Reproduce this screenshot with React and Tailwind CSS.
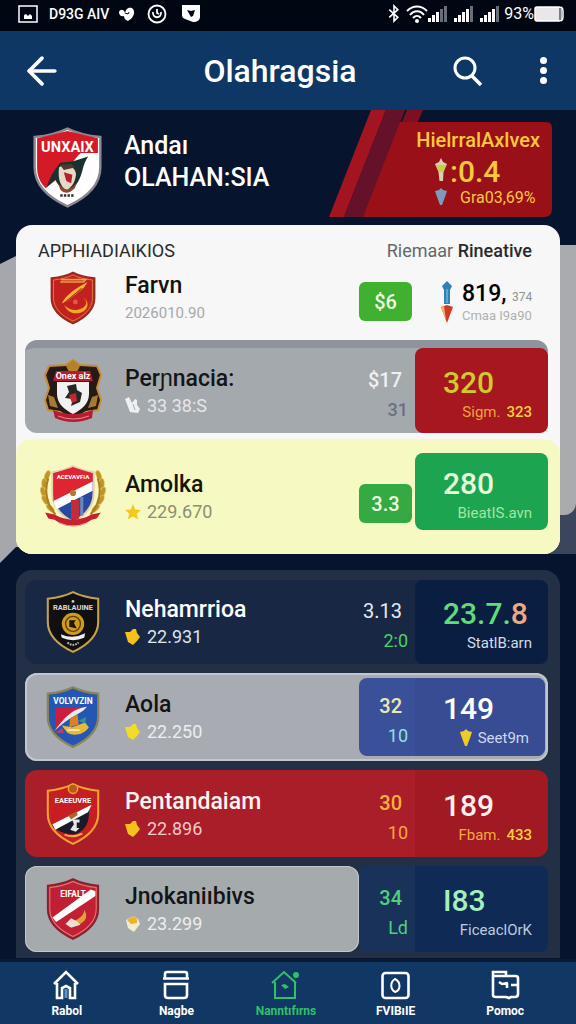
import { ArrowLeft } from "lucide-react";

const SHIELD = "M30 2 C38 6 47 8 57 9 V34 C57 49 45 59 30 66 C15 59 3 49 3 34 V9 C13 8 22 6 30 2 Z";

function CrestText({ children, y = 19, fill = "#fff", size = 9 }) {
  return (
    <text x="30" y={y} textAnchor="middle" fontSize={size} fontWeight="700" fill={fill}>
      {children}
    </text>
  );
}

function HeroCrest() {
  return (
    <svg viewBox="0 0 60 68" className="h-[83px] w-[73px]" aria-hidden="true">
      <path d={SHIELD} fill="#fff" stroke="#8b8790" strokeWidth="2" />
      <path d="M30 4 L55 10 V22 H41 C36 26 32 34 27 39 L12 51 C7 46 5 40 5 34 V10 Z" fill="#d31a26" />
      <path d="M13 50 C16 39 22 33 24 30 L34 29 L47 25 C42 32 43 38 39 45 C34 54 25 55 20 44 Z" fill="#1d3030" />
      <path d="M23 34 C28 30 37 33 37 40 C36 48 32 51 29 53 C24 49 22 44 23 34 Z" fill="#e8d8c8" />
      <path d="M24 32 L33 31 L36 34 L27 36 Z" fill="#4a3a30" />
      <path d="M27 38 L34 40 L33 47 L29 45 Z" fill="#b5202a" />
      <path d="M22 46 Q29 58 38 46 L36 51 Q29 58 24 52 Z" fill="#8f4530" />
      <path d="M24 57 h11" stroke="#333" strokeWidth="2" strokeDasharray="2 1" />
      <CrestText size={12} y={21}>UNXAIX</CrestText>
    </svg>
  );
}

function FarvnCrest() {
  return (
    <svg viewBox="0 0 60 68" className="h-14 w-12" aria-hidden="true">
      <path d={SHIELD} fill="#c2211f" stroke="#8f2a20" strokeWidth="2" />
      <path d={SHIELD} fill="none" stroke="#e29a4a" strokeWidth="1" transform="translate(3 3.4) scale(0.9)" />
      <path d="M15 11 H46 L43 14 H14" fill="none" stroke="#e8a040" strokeWidth="2" />
      <path d="M16 41 C20 31 33 22 48 14 C44 24 34 28 23 38 Z" fill="#f2b632" />
      <path d="M17 42 L41 22" stroke="#c2211f" strokeWidth="1.5" />
      <path d="M19 43 C26 50 37 51 44 45 C48 41 47 37 43 34 C52 39 49 51 37 53 C29 54 23 51 19 43 Z" fill="#f2a922" />
      <circle cx="33" cy="39" r="3" fill="#e8574a" />
    </svg>
  );
}

function PernaciaCrest() {
  return (
    <svg viewBox="0 0 60 66" className="h-[66px] w-[60px]" aria-hidden="true">
      <path d="M30 2 L37 7 L54 8 L58 17 L54 30 L58 42 L55 52 L43 54 L30 62 L17 54 L5 52 L2 42 L6 30 L2 17 L6 8 L23 7 Z" fill="#251a16" stroke="#c98c35" strokeWidth="2" />
      <path d="M30 2 L37 8 L34 14 H26 L23 8 Z" fill="#b78225" />
      <path d="M13 13 H47 L50 23 H10 Z" fill="#b91c2b" />
      <path d="M14 24 H46 V36 C46 46 38 52 30 56 C22 52 14 46 14 36 Z" fill="#f1f1f1" />
      <path d="M24 28 L33 26 L34 32 L39 35 L37 44 L28 48 L30 41 L22 40 L26 34 Z" fill="#272727" />
      <path d="M26 37 L33 35 L34 43 L29 45 Z" fill="#c02832" />
      <path d="M5 37 L11 39 L15 50 L7 48 Z M55 37 L49 39 L45 50 L53 48 Z" fill="#a77a31" />
      <path d="M10 52 Q30 60 50 52 L49 60 Q30 68 12 60 Z" fill="#b51c32" />
      <path d="M15 58 Q30 64 46 58" fill="none" stroke="#e58b92" strokeWidth="1" />
      <CrestText size={9} y={21}>Onex alz</CrestText>
    </svg>
  );
}

function AmolkaCrest() {
  return (
    <svg viewBox="0 0 68 62" className="h-16 w-[70px]" aria-hidden="true">
      <g fill="#c09428" stroke="#e6c560" strokeWidth="0.6">
        {[10, 18, 26, 34, 42].map((y, i) => (
          <g key={y}>
            <ellipse cx={[9, 6, 5, 7, 12][i]} cy={y} rx="2.4" ry="5" transform={`rotate(${[20, 0, -15, -30, -45][i]} ${[9, 6, 5, 7, 12][i]} ${y})`} />
            <ellipse cx={[59, 62, 63, 61, 56][i]} cy={y} rx="2.4" ry="5" transform={`rotate(${[-20, 0, 15, 30, 45][i]} ${[59, 62, 63, 61, 56][i]} ${y})`} />
          </g>
        ))}
      </g>
      <path d="M10 13 C6 24 8 38 17 48 M58 13 C62 24 60 38 51 48" fill="none" stroke="#a87d1c" strokeWidth="2" />
      <path d="M34 1 C40 4 47 6 54 7 V27 C54 41 46 49 34 55 C22 49 14 41 14 27 V7 C21 6 28 4 34 1 Z" fill="#2749a2" stroke="#e9cfa5" strokeWidth="2" />
      <path d="M34 2 L53 8 V17 L15 36 V8 Z" fill="#df2434" />
      <path d="M15 35 L53 16 V25 L18 43 Z" fill="#fff" />
      <path d="M32 34 h8 v18 l-5 2 l-3 -2 Z" fill="#c22d3c" />
      <path d="M41 31 h3 v18 h-3 Z" fill="#6a88bc" />
      <circle cx="34" cy="27" r="3" fill="#b77937" />
      <path d="M7 46 L16 48 Q34 58 52 48 L61 46 L57 52 L52 53 Q34 66 16 53 L10 52 Z" fill="#c8202f" />
      <path d="M20 56 Q34 62 48 56" fill="none" stroke="#e99" strokeWidth="1" />
      <text x="34" y="14" textAnchor="middle" fontSize="6" fontWeight="700" fill="#fff">ACEVAVFIA</text>
    </svg>
  );
}

function NehamCrest() {
  return (
    <svg viewBox="0 0 60 68" className="h-[66px] w-14" aria-hidden="true">
      <path d={SHIELD} fill="#101012" stroke="#c7a24a" strokeWidth="2.2" />
      <circle cx="30" cy="36" r="12" fill="#cf9c1f" />
      <circle cx="30" cy="36" r="8" fill="none" stroke="#5c4210" strokeWidth="1.5" />
      <path d="M26 32 h7 l-2 3 3 6 -8 -2 Z" fill="#1d1708" />
      <path d="M17 47 Q30 53 43 46 L42 51 Q30 56 18 51 Z" fill="#f0f0f0" />
      <path d="M24 56 Q30 61 36 56" fill="none" stroke="#bbb" strokeWidth="2" strokeDasharray="2 1" />
      <circle cx="30" cy="12" r="1.5" fill="#ccc" />
      <CrestText size={8} y={21} fill="#d8d8d8">RABLAUINE</CrestText>
    </svg>
  );
}

function AolaCrest() {
  return (
    <svg viewBox="0 0 60 68" className="h-[68px] w-14" aria-hidden="true">
      <path d={SHIELD} fill="#2457b4" stroke="#8d8454" strokeWidth="2.4" />
      <path d="M11 24 H38 L11 48 Z" fill="#c91f3d" />
      <path d="M10 49 C18 39 27 25 45 23 C39 31 28 32 10 49 Z" fill="#f0e8ef" />
      <path d="M27 35 L35 31 L36 42 L26 45 Z" fill="#d58229" />
      <path d="M18 43 L29 45 L43 40 L47 45 C42 53 31 55 24 51 Z" fill="#e7b936" />
      <path d="M36 38 L44 34 L43 41 Z" fill="#2c9b8d" />
      <path d="M24 48 h13" stroke="#f6e8aa" strokeWidth="2" />
      <path d="M11 51 L19 46 L20 51 Z" fill="#c04164" />
      <CrestText size={9} y={20}>VOLVVZIN</CrestText>
    </svg>
  );
}

function PentanCrest() {
  return (
    <svg viewBox="0 0 60 68" className="h-[66px] w-14" aria-hidden="true">
      <path d={SHIELD} fill="#c71e24" stroke="#f0a42c" strokeWidth="2.2" />
      <circle cx="30" cy="7" r="5" fill="#b9591c" stroke="#f0a42c" strokeWidth="1.5" />
      <path d="M9 48 L47 29 C48 42 44 52 32 56 C22 56 15 53 9 48 Z" fill="#191b26" />
      <path d="M8 45 L50 24 L46 32 L11 51 Z" fill="#fff" />
      <path d="M25 36 L34 31 L35 35 L28 40 Z" fill="#a9672d" />
      <path d="M29 40 h8 v3 h-3 v6 h3 l-4 4 -6 -2 4 -6 Z" fill="#e6e6e6" />
      <path d="M21 56 Q30 60 40 55" fill="none" stroke="#eeae55" strokeWidth="2" />
      <CrestText size={8} y={22}>EAEEUVRE</CrestText>
    </svg>
  );
}

function JnokanCrest() {
  return (
    <svg viewBox="0 0 60 68" className="h-[66px] w-14" aria-hidden="true">
      <path d={SHIELD} fill="#c01f34" stroke="#842334" strokeWidth="2" />
      <path d={SHIELD} fill="none" stroke="#e07f70" strokeWidth="1.2" transform="translate(2.4 2.7) scale(0.92)" />
      <path d="M8 43 L49 13 L54 15 V20 L12 48 Z" fill="#fff" />
      <path d="M25 48 C31 48 42 43 42 35 C49 45 38 53 26 52 Z" fill="#e3a13a" />
      <path d="M22 50 L28 44 L34 47 L38 51 L28 54 Z" fill="#e8dfd5" />
      <CrestText size={9} y={21}>EIFALT</CrestText>
    </svg>
  );
}

function Gem({ fill = "#f5c21b" }) {
  return (
    <svg viewBox="0 0 16 18" className="h-[18px] w-4" aria-hidden="true">
      <path d="M0 4 L5 4 L8 1 L11 1 L12 5 L15 9 L12 13 L8 17 L3 14 Z" fill={fill} />
    </svg>
  );
}

function PaleGem() {
  return (
    <svg viewBox="0 0 16 18" className="h-[18px] w-4" aria-hidden="true">
      <path d="M1 5 L8 1 L13 4 L15 9 L9 17 L3 13 Z" fill="#f4edcf" />
      <path d="M2 5 L8 1 L12 4 L12 8 L6 9 Z" fill="#f0b12c" />
    </svg>
  );
}

function Star() {
  return (
    <svg viewBox="0 0 16 16" className="h-4 w-4" aria-hidden="true">
      <path d="M8 0 L10.2 5.4 L16 6 L11.7 9.8 L13.2 15.6 L8 12.6 L2.8 15.6 L4.3 9.8 L0 6 L5.8 5.4 Z" fill="#f3c920" />
    </svg>
  );
}

function Glove() {
  return (
    <svg viewBox="0 0 16 17" className="h-[17px] w-4" aria-hidden="true">
      <path d="M0 2 L4 0 L7 6 L10 2 L12 3 L12 8 L15 12 L13 16 L5 15 Z" fill="#eef0f2" />
      <path d="M8 7 L10 13" stroke="#a9adb2" strokeWidth="1" />
    </svg>
  );
}

function Torch({ className, fill }) {
  return (
    <svg viewBox="0 0 12 24" className={className} aria-hidden="true">
      <path d="M6 0 L8 4 L12 6 L8.5 14 L8 23 L4.5 23 L3.5 14 L0 6 L4 4 Z" fill="#d9cfae" />
      <path d="M1 7 H11 L8 14 H4 Z" fill={fill} />
    </svg>
  );
}

function Cone({ fill, className }) {
  return (
    <svg viewBox="0 0 12 18" className={className} aria-hidden="true">
      <path d="M0 3 L4 2 L6 0 L8 2 L12 3 L10 9 L7 17 H5 L2 9 Z" fill={fill} />
    </svg>
  );
}

function UpDown() {
  return (
    <svg viewBox="0 0 12 42" className="h-[42px] w-3" aria-hidden="true">
      <path d="M6 0 L11 5 L9 9 V23 H3 V9 L1 5 Z" fill="#3182b0" />
      <path d="M6 8 V22" stroke="#5ba9d3" strokeWidth="2" />
      <path d="M0 26 L6 24 L12 26 L6 42 Z" fill="#d33a22" />
      <path d="M0 26 L3 25 L5 39 Z" fill="#f0b46a" />
    </svg>
  );
}

function Signal({ bars }) {
  return (
    <svg viewBox="0 0 20 17" className="h-[17px] w-5" aria-hidden="true">
      {[0, 1, 2, 3, 4].map((i) => (
        <rect key={i} x={i * 4} y={13 - i * 3} width="3" height={4 + i * 3} fill={i < bars ? "#fff" : "#686e7c"} />
      ))}
    </svg>
  );
}

function StatusBar() {
  return (
    <div className="flex h-[31px] items-center justify-between bg-[#010613] pr-3 pb-1 pl-[18px] text-white">
      <div className="flex items-center">
        <svg viewBox="0 0 20 18" className="h-[18px] w-5" aria-hidden="true">
          <rect x="1" y="1" width="18" height="16" fill="none" stroke="#fff" strokeWidth="1.5" />
          <path d="M6 14 V10 L8 9 L10 11 L12 9 L14 11 V14 Z" fill="#fff" />
        </svg>
        <span className="ml-[11px] text-sm font-medium">D93G AIV</span>
        <svg viewBox="0 0 16 14" className="ml-2.5 h-[14px] w-4" aria-hidden="true">
          <path d="M6 6 C7 1 10 0 13 1 C17 4 15 11 9 14 C6 13 5 11 5 9 C2 10 0 8 0 5 C1 2 5 2 6 6 Z" fill="#fff" />
          <path d="M6 6 L9 7 L10 5" fill="none" stroke="#010613" />
        </svg>
        <svg viewBox="0 0 20 20" className="ml-3 h-5 w-5" aria-hidden="true">
          <circle cx="10" cy="10" r="8.5" fill="none" stroke="#fff" strokeWidth="1.8" />
          <path d="M6 8 C5 15 15 15 14 8 M10 5 V9 L12 10" fill="none" stroke="#fff" strokeWidth="1.8" />
        </svg>
        <svg viewBox="0 0 20 18" className="ml-3.5 h-[18px] w-5" aria-hidden="true">
          <path d="M1 0 H19 V12 C19 15 16 17 12 17 L4 14 C2 13 1 12 1 10 Z" fill="#fff" />
          <path d="M6 5 L10 6 L14 5 L12 11 L10 12 Z" fill="#010613" />
        </svg>
      </div>
      <div className="flex items-center">
        <svg viewBox="0 0 12 20" className="h-[19px] w-3" aria-hidden="true">
          <path d="M1 6 L10 14 L6 18 V2 L10 6 L1 14" fill="none" stroke="#fff" strokeWidth="1.7" />
        </svg>
        <svg viewBox="0 0 22 18" className="ml-1.5 h-[18px] w-[22px]" aria-hidden="true">
          <path d="M1 6 C7 0 15 0 21 6 M4 10 C8 5 14 5 18 10 M7 13 C10 10 12 10 15 13" fill="none" stroke="#fff" strokeWidth="2" />
          <circle cx="11" cy="16" r="2" fill="#fff" />
        </svg>
        <Signal bars={3} />
        <span className="ml-1.5 flex gap-1.5">
          <Signal bars={4} />
          <Signal bars={4} />
        </span>
        <span className="ml-1 text-base leading-5">93%</span>
        <svg viewBox="0 0 30 16" className="h-4 w-[30px]" aria-hidden="true">
          <rect x="1" y="1" width="26" height="14" rx="2" fill="#e8e8ea" stroke="#fff" strokeWidth="1.5" />
          <path d="M27 1 Q29 2 29 5 V11 Q29 14 27 15" fill="none" stroke="#fff" strokeWidth="1.5" />
          <path d="M26 2 V14" stroke="#55585f" strokeWidth="1.5" />
        </svg>
      </div>
    </div>
  );
}

function AppBar() {
  return (
    <header className="grid h-[79px] grid-cols-[1fr_auto_1fr] items-center bg-[#0e3765] px-5 text-white">
      <button aria-label="Back" className="w-11">
        <ArrowLeft size={44} strokeWidth={2} />
      </button>
      <h1 className="pr-4 text-[32px] leading-10 font-medium">Olahragsia</h1>
      <div className="flex items-center justify-end gap-14 pr-[9px]">
        <button aria-label="Search">
          <svg viewBox="0 0 30 30" className="h-[30px] w-[30px]" fill="none" stroke="currentColor" strokeWidth="3" aria-hidden="true">
            <circle cx="12" cy="12" r="10" />
            <path d="M18 19 L28 29" strokeWidth="3.5" />
          </svg>
        </button>
        <button aria-label="More" className="flex w-2 flex-col items-center gap-[3px]">
          <span className="h-[7px] w-[7px] rounded-full bg-white" />
          <span className="h-[7px] w-[7px] rounded-full bg-white" />
          <span className="h-[7px] w-[7px] rounded-full bg-white" />
        </button>
      </div>
    </header>
  );
}

function Hero() {
  return (
    <section className="flex h-[115px] items-start justify-between bg-[#07142d] pl-[31px] pr-6">
      <div className="flex items-center gap-5 pt-4">
        <HeroCrest />
        <div className="pb-3 text-[25px] leading-8 font-medium text-white">
          <p>Andaı</p>
          <p>OLAHAN:SIA</p>
        </div>
      </div>
      <div className="relative isolate flex h-[107px] w-[223px] flex-col items-end pt-[18px] pr-3 text-[#f9c83c]">
        <svg viewBox="0 0 223 107" className="absolute inset-0 -z-10 h-full w-full" aria-hidden="true">
          <path d="M42 0 H57 L15 107 H0 Z" fill="#a2141f" />
          <path d="M57 0 H76 L36 107 H15 Z" fill="#641129" />
          <path d="M78 0 H94 L88 14 H72 Z" fill="#7c1022" />
          <path d="M71 12 H217 Q223 12 223 18 V99 Q223 107 215 107 H34 Z" fill="#9a1019" />
        </svg>
        <p className="text-xl leading-6 font-medium">HielrralAxlvex</p>
        <div className="flex w-[106px] gap-0.5 pt-0.5">
          <div className="flex w-3.5 flex-col items-center gap-1.5 pt-1">
            <Torch className="h-6 w-3" fill="#c9cf45" />
            <Cone className="h-[18px] w-3.5" fill="#7d9cba" />
          </div>
          <div>
            <p className="text-[30px] leading-9 font-medium">:0.4</p>
            <p className="pl-2.5 text-base leading-4">Gra03,69%</p>
          </div>
        </div>
      </div>
    </section>
  );
}

function Team({ crest, name, icon, sub, nameClass, subClass }) {
  return (
    <div className="flex min-w-0 items-center gap-1">
      <div className="flex w-24 shrink-0 justify-center">{crest}</div>
      <div>
        <p className={`text-[23px] leading-[30px] font-medium ${nameClass}`}>{name}</p>
        <p className={`flex items-center gap-1.5 leading-6 ${subClass}`}>
          {icon}
          {sub}
        </p>
      </div>
    </div>
  );
}

function Pair({ top, bottom, topClass, bottomClass }) {
  return (
    <div className="flex w-14 shrink-0 flex-col items-end justify-center pt-2 pr-[7px] text-xl leading-[30px]">
      <p className={`pr-1.5 ${topClass}`}>{top}</p>
      <p className={`text-lg leading-[30px] ${bottomClass}`}>{bottom}</p>
    </div>
  );
}

function Score({ value, label, className, valueClass, labelClass }) {
  return (
    <div className={`flex min-w-0 flex-1 flex-col justify-center pt-2 pr-4 pl-7 ${className}`}>
      <p className={`text-[30px] leading-[34px] font-medium ${valueClass}`}>{value}</p>
      <p className={`flex items-center justify-end gap-1.5 text-[15px] leading-6 whitespace-nowrap ${labelClass}`}>{label}</p>
    </div>
  );
}

function LightCard() {
  return (
    <section className="relative isolate px-4">
      <div className="absolute top-5 bottom-0 left-0 -z-10 w-1/2 translate-y-[9px] bg-[#a5a7ad] [clip-path:polygon(0_10px,20px_0,100%_0,100%_94%,16px_calc(100%_-_16px),0_100%)]" />
      <div className="absolute top-5 right-0 bottom-0 -z-10 w-1/2 bg-[#3b465c]">
        <div className="h-[270px] rounded-b-xl bg-[#aaabae]" />
      </div>
      <div className="overflow-hidden rounded-2xl bg-[#f6f7f6]">
        <div className="flex items-center justify-between pt-4 pr-7 pl-[22px] text-lg leading-5 text-[#2a2a2c]">
          <h2>APPHIADIAIKIOS</h2>
          <p>
            <span className="text-[#66676a]">Riemaar</span> <span className="font-medium">Rineative</span>
          </p>
        </div>
        <ul>
          <li className="mr-3 ml-[9px] grid h-[79px] grid-cols-[1fr_189px] pb-1.5">
            <Team crest={<FarvnCrest />} name="Farvn" sub="2026010.90" nameClass="text-[#111]" subClass="text-[15px] text-[#a6a7a9]" />
            <div className="flex items-center pt-2">
              <button className="h-[39px] w-[53px] rounded-md bg-[#3fb02f] text-xl font-medium text-[#eefbe0]">$6</button>
              <div className="flex flex-1 items-center pl-[29px]">
                <UpDown />
                <div className="ml-[9px] whitespace-nowrap">
                  <p className="text-[23px] leading-7 font-medium text-black">
                    819, <span className="text-xs font-normal text-[#909295]">374</span>
                  </p>
                  <p className="text-[13px] leading-4 text-[#b0b1b3]">Cmaa I9a90</p>
                </div>
              </div>
            </div>
          </li>
          <li className="mr-3 ml-[9px] grid h-[93px] grid-cols-[1fr_189px] rounded-xl border-t-8 border-[#8f939d] bg-[#a4a9ae]">
            <Team crest={<PernaciaCrest />} name="Perɲnacia:" icon={<Glove />} sub="33 38:S" nameClass="text-[#151517]" subClass="text-lg text-[#e4e6e8]" />
            <div className="flex">
              <Pair top="$17" bottom="31" topClass="font-medium text-[#eef0f2]" bottomClass="font-medium text-[#6a7080]" />
              <Score
                value="320"
                label={<>Sigm. <b className="font-medium text-[#f3cd3a]">323</b></>}
                className="rounded-lg bg-[#a61720]"
                valueClass="text-[#d2c92d]"
                labelClass="text-[#f0a23c]"
              />
            </div>
          </li>
          <li className="mt-1.5 grid h-[115px] grid-cols-[1fr_189px] rounded-t-2xl bg-[#f6fac2] pr-3 pl-[9px]">
            <Team crest={<AmolkaCrest />} name="Amolka" icon={<Star />} sub="229.670" nameClass="text-[#141408]" subClass="text-lg text-[#8b8e72]" />
            <div className="flex gap-[3px]">
              <button className="mt-[45px] h-[39px] w-[53px] rounded-md bg-[#35aa42] text-xl font-medium text-[#eafcdc]">3.3</button>
              <Score
                value="280"
                label="BieatIS.avn"
                className="mt-3.5 mb-6 rounded-lg bg-[#1ca451]"
                valueClass="text-[#e9fbd9]"
                labelClass="text-[#a4e6a0]"
              />
            </div>
          </li>
        </ul>
      </div>
    </section>
  );
}

function DarkCard() {
  return (
    <section className="mx-4 mt-4 rounded-t-2xl bg-[#232f45] pt-2.5 pr-3 pb-1.5 pl-[9px]">
      <ul className="flex flex-col gap-[9px]">
        <li className="grid h-[84px] grid-cols-[1fr_189px] rounded-xl bg-[#182744]">
          <Team crest={<NehamCrest />} name="Nehamrrioa" icon={<Gem />} sub="22.931" nameClass="text-white" subClass="text-lg text-[#dfe3ea]" />
          <div className="flex">
            <Pair top="3.13" bottom="2:0" topClass="text-[#e6eaf2]" bottomClass="text-[#4bd267]" />
            <Score
              value={<>23.7.<span className="text-[#f0a87c]">8</span></>}
              label="StatlB:arn"
              className="rounded-lg bg-[#0a1e42]"
              valueClass="text-[#5fdc76]"
              labelClass="text-[#d4dbe6]"
            />
          </div>
        </li>
        <li className="grid h-[88px] grid-cols-[1fr_189px] rounded-xl bg-[#a8acb2] ring-2 ring-[#c1c6cf] ring-inset">
          <Team crest={<AolaCrest />} name="Aola" icon={<Gem fill="#f3dc28" />} sub="22.250" nameClass="text-[#141416]" subClass="text-lg text-[#eceef0]" />
          <div className="my-[5px] mr-[3px] flex overflow-hidden rounded-lg bg-[#3a519a]">
            <Pair top="32" bottom="10" topClass="font-medium text-[#efe6b4]" bottomClass="text-[#8fe0dc]" />
            <Score
              value="149"
              label={<><Cone className="h-[18px] w-3" fill="#f0cb27" />Seet9m</>}
              className="bg-[#374c92]"
              valueClass="text-white"
              labelClass="text-[#cfd8f0]"
            />
          </div>
        </li>
        <li className="grid h-[87px] grid-cols-[1fr_189px] overflow-hidden rounded-xl bg-[#aa1e2a]">
          <Team crest={<PentanCrest />} name="Pentandaiam" icon={<Gem />} sub="22.896" nameClass="text-[#fff3f0]" subClass="text-lg text-[#f2c9c9]" />
          <div className="flex">
            <Pair top="30" bottom="10" topClass="font-medium text-[#f8b03a]" bottomClass="text-[#f6a83a]" />
            <Score
              value="189"
              label={<>Fbam. <b className="font-medium text-[#f7cf3c]">433</b></>}
              className="bg-[#a01923]"
              valueClass="text-[#fff0ee]"
              labelClass="text-[#f6a83a]"
            />
          </div>
        </li>
        <li className="grid h-[86px] grid-cols-[1fr_189px]">
          <div className="grid rounded-xl bg-[#a5aaad] ring-1 ring-[#c3c7cb] ring-inset">
            <Team crest={<JnokanCrest />} name="Jnokaniıbivs" icon={<PaleGem />} sub="23.299" nameClass="text-[#141416]" subClass="text-lg text-[#eceef0]" />
          </div>
          <div className="flex overflow-hidden rounded-lg bg-[#18325a]">
            <Pair top="34" bottom="Ld" topClass="font-medium text-[#4fd07a]" bottomClass="text-[#4fd07a]" />
            <Score
              value="I83"
              label="FiceaclOrK"
              className="bg-[#0f2a55]"
              valueClass="text-[#a4efbd]"
              labelClass="text-[#bfcbe0]"
            />
          </div>
        </li>
      </ul>
    </section>
  );
}

const tabs = [
  {
    label: "Rabol",
    icon: (
      <>
        <path d="M2 14 L14 2 L26 14 M5 13 V28 H10 V18 L14 16 L18 18 V28 H23 V13" />
        <path d="M14 19 V28" stroke="#5e93c8" strokeWidth="3" />
      </>
    ),
  },
  { label: "Nagbe", icon: <path d="M3 8 V4 Q3 2 5 2 H23 Q25 2 25 4 V8 M1 8.5 H27 M3 14 V25 Q3 28 6 28 H22 Q25 28 25 25 V14 Z" /> },
  {
    label: "Nanntıfırns",
    active: true,
    icon: (
      <>
        <path d="M1 13 L13 2 L25 13 M4 12 V28 H24 V12" strokeWidth="2" />
        <circle cx="25" cy="5" r="3" fill="currentColor" stroke="none" />
        <path d="M10 15 L14 14 L18 17 L14 19 Z" fill="currentColor" stroke="none" />
      </>
    ),
  },
  {
    label: "FVIBıIE",
    icon: (
      <>
        <rect x="1.5" y="3" width="26" height="25" rx="3" />
        <path d="M14 9 C9 12 9 19 14 22 C20 20 20 12 14 9 Z" strokeWidth="2" />
      </>
    ),
  },
  {
    label: "Pomoc",
    icon: <path d="M2 5 V25 Q2 27 5 27 H15 L18 28 L20 27 H24 Q27 27 27 24 V8 Q27 6 24 6 H15 V2 H2 V5 M2 6 H15 M8 12 L11 14 L17 13 M16 13 V18 M20 15 H27" />,
  },
];

function TabBar() {
  return (
    <nav className="mt-auto border-t-[3px] border-[#081a36] bg-[#113765] pr-4 pl-3">
      <ul className="grid h-[62px] grid-cols-5">
        {tabs.map((tab) => (
          <li key={tab.label}>
            <a href="#" className={`flex flex-col items-center pt-2 ${tab.active ? "text-[#2fc169]" : "text-white"}`}>
              <svg viewBox="0 0 29 30" className="h-[30px] w-[29px]" fill="none" stroke="currentColor" strokeWidth="2.6" aria-hidden="true">
                {tab.icon}
              </svg>
              <span className="text-xs leading-[22px] font-bold">{tab.label}</span>
            </a>
          </li>
        ))}
      </ul>
    </nav>
  );
}

export default function App() {
  return (
    <div className="flex min-h-screen flex-col bg-[#07142d] font-[Roboto,'Liberation_Sans',sans-serif]">
      <StatusBar />
      <AppBar />
      <Hero />
      <main>
        <LightCard />
        <DarkCard />
      </main>
      <TabBar />
    </div>
  );
}
